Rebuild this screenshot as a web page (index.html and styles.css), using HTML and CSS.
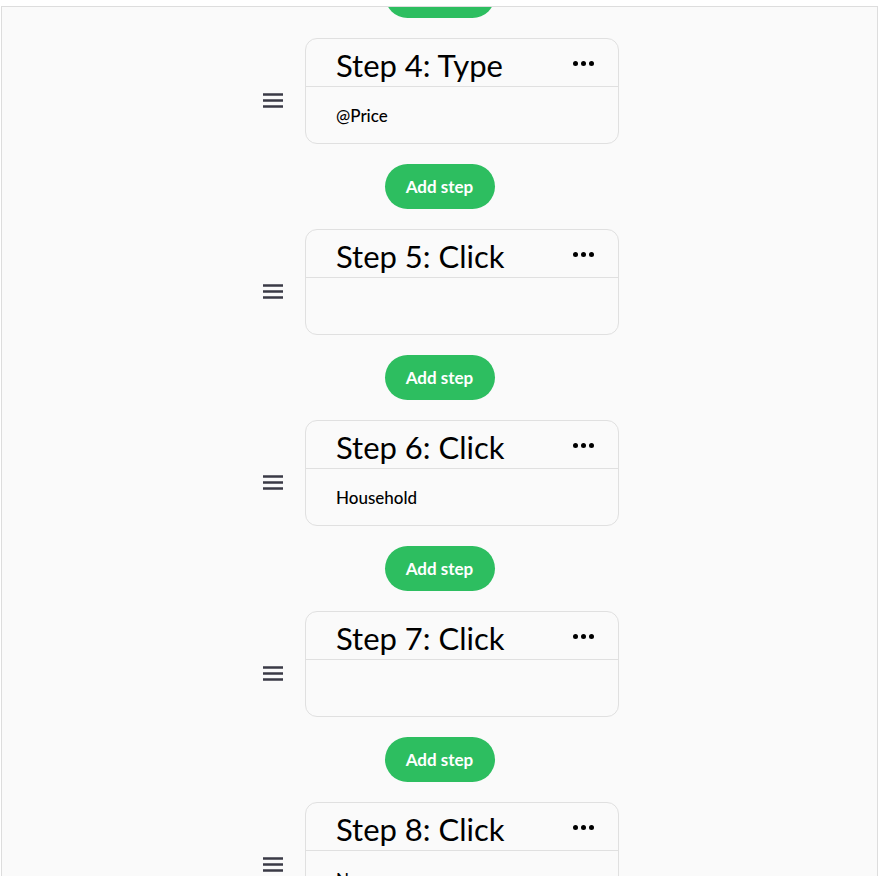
FILE: index.html
```html
<!DOCTYPE html>
<html>
<head>
<meta charset="utf-8">
<link rel="stylesheet" href="styles.css">
</head>
<body>
<div class="frame">
  <div class="steps">
    <button class="add-btn">Add step</button>

    <div class="step-row">
      <svg class="drag" viewBox="0 0 24 24"><path d="M3 6.5h20M3 12.5h20M3 18.5h20"/></svg>
      <div class="card">
        <div class="card-head"><span class="title">Step 4: Type</span><span class="dots"><i></i><i></i><i></i></span></div>
        <div class="card-body">@Price</div>
      </div>
    </div>
    <button class="add-btn">Add step</button>

    <div class="step-row">
      <svg class="drag" viewBox="0 0 24 24"><path d="M3 6.5h20M3 12.5h20M3 18.5h20"/></svg>
      <div class="card">
        <div class="card-head"><span class="title">Step 5: Click</span><span class="dots"><i></i><i></i><i></i></span></div>
        <div class="card-body"></div>
      </div>
    </div>
    <button class="add-btn">Add step</button>

    <div class="step-row">
      <svg class="drag" viewBox="0 0 24 24"><path d="M3 6.5h20M3 12.5h20M3 18.5h20"/></svg>
      <div class="card">
        <div class="card-head"><span class="title">Step 6: Click</span><span class="dots"><i></i><i></i><i></i></span></div>
        <div class="card-body">Household</div>
      </div>
    </div>
    <button class="add-btn">Add step</button>

    <div class="step-row">
      <svg class="drag" viewBox="0 0 24 24"><path d="M3 6.5h20M3 12.5h20M3 18.5h20"/></svg>
      <div class="card">
        <div class="card-head"><span class="title">Step 7: Click</span><span class="dots"><i></i><i></i><i></i></span></div>
        <div class="card-body"></div>
      </div>
    </div>
    <button class="add-btn">Add step</button>

    <div class="step-row">
      <svg class="drag" viewBox="0 0 24 24"><path d="M3 6.5h20M3 12.5h20M3 18.5h20"/></svg>
      <div class="card">
        <div class="card-head"><span class="title">Step 8: Click</span><span class="dots"><i></i><i></i><i></i></span></div>
        <div class="card-body">Name</div>
      </div>
    </div>
  </div>
</div>
</body>
</html>
```

FILE: styles.css
```css
html, body {
  margin: 0;
  padding: 0;
  background: #ffffff;
  font-family: "Lato", "Open Sans", sans-serif;
}

.frame {
  margin: 6px 3px 0 1px;
  height: 870px;
  border-top: 1px solid #dddddd;
  border-left: 1px solid #dddddd;
  border-right: 1px solid #dddddd;
  background: #fafafa;
  overflow: hidden;
  box-sizing: border-box;
}

.steps {
  margin-top: -34px;
  display: flex;
  flex-direction: column;
  align-items: center;
  gap: 20px;
}

.add-btn {
  width: 110px;
  height: 45px;
  border: none;
  border-radius: 23px;
  background: #2dbe60;
  color: #ffffff;
  font-family: "Lato", sans-serif;
  font-weight: 700;
  font-size: 17px;
  padding: 0;
  flex: none;
}

.step-row {
  display: flex;
  align-items: flex-start;
  gap: 21px;
  margin-left: 0;
}

.drag {
  width: 24px;
  height: 24px;
  margin-top: 50px;
  fill: none;
  stroke: #3a3a46;
  stroke-width: 2.4;
}

.card {
  width: 314px;
  border: 1px solid #e0e0e0;
  border-radius: 12px;
  background: #fafafa;
  box-sizing: border-box;
}

.card-head {
  height: 48px;
  box-sizing: border-box;
  border-bottom: 1px solid #e0e0e0;
  display: flex;
  justify-content: space-between;
  align-items: flex-start;
  padding: 8px 24px 0 30px;
}

.title {
  font-size: 31px;
  line-height: 36px;
  color: #000000;
  font-weight: 400;
}

.dots {
  display: flex;
  gap: 3px;
  margin-top: 14px;
}

.dots i {
  display: block;
  width: 5px;
  height: 5px;
  border-radius: 50%;
  background: #000000;
}

.card-body {
  height: 56px;
  display: flex;
  align-items: center;
  padding: 0 30px;
  font-size: 17px;
  font-weight: 500;
  color: #000000;
}
```
